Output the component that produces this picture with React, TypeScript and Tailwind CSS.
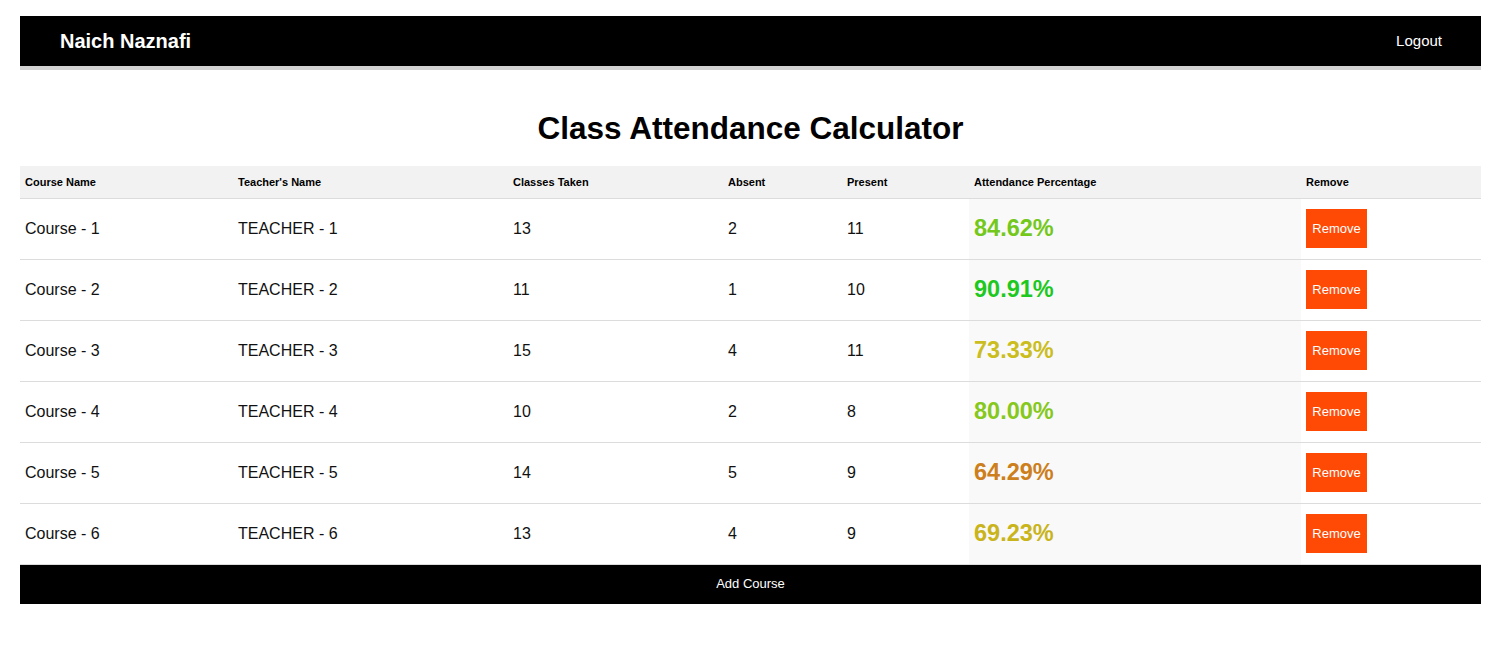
import React from 'react';

interface Course {
  name: string;
  teacher: string;
  taken: number;
  absent: number;
  present: number;
  pct: string;
  color: string;
}

const courses: Course[] = [
  { name: 'Course - 1', teacher: 'TEACHER - 1', taken: 13, absent: 2, present: 11, pct: '84.62%', color: 'text-[#74c81c]' },
  { name: 'Course - 2', teacher: 'TEACHER - 2', taken: 11, absent: 1, present: 10, pct: '90.91%', color: 'text-[#1ec81e]' },
  { name: 'Course - 3', teacher: 'TEACHER - 3', taken: 15, absent: 4, present: 11, pct: '73.33%', color: 'text-[#cbbd1e]' },
  { name: 'Course - 4', teacher: 'TEACHER - 4', taken: 10, absent: 2, present: 8, pct: '80.00%', color: 'text-[#86c81c]' },
  { name: 'Course - 5', teacher: 'TEACHER - 5', taken: 14, absent: 5, present: 9, pct: '64.29%', color: 'text-[#cc7f1c]' },
  { name: 'Course - 6', teacher: 'TEACHER - 6', taken: 13, absent: 4, present: 9, pct: '69.23%', color: 'text-[#c9b41c]' },
];

const cols = ['w-[213px]', 'w-[275px]', 'w-[215px]', 'w-[119px]', 'w-[127px]', 'w-[332px]', 'w-[180px]'];
const heads = ['Course Name', "Teacher's Name", 'Classes Taken', 'Absent', 'Present', 'Attendance Percentage', 'Remove'];

export default function App() {
  return (
    <div className="min-h-screen bg-white pl-[20px] pr-[19px] pt-[16px] font-['Liberation_Sans',Arial,sans-serif] text-[#111]">
      {/* Navbar */}
      <nav className="h-[50px] bg-black flex items-center justify-between pl-[40px] pr-[39px] shadow-[0_4px_0_#d2d2d2]">
        <span className="text-white text-[20px] font-bold">Naich Naznafi</span>
        <span className="text-white text-[15px]">Logout</span>
      </nav>

      <h1 className="mt-[44px] mb-[20px] text-center text-[31.5px] leading-[36px] font-bold text-black">
        Class Attendance Calculator
      </h1>

      <table className="w-full table-fixed border-collapse">
        <thead>
          <tr className="bg-[#f2f2f2] h-[32px] border-b border-[#dcdcdc]">
            {heads.map((h, i) => (
              <th key={i} className={`${cols[i]} px-[5px] text-left text-[11px] font-bold text-black`}>{h}</th>
            ))}
          </tr>
        </thead>
        <tbody>
          {courses.map((c, i) => (
            <tr key={i} className="h-[61px] border-b border-[#dcdcdc] text-[16px]">
              <td className="px-[5px] pt-[1px]">{c.name}</td>
              <td className="px-[5px] pt-[1px]">{c.teacher}</td>
              <td className="px-[5px] pt-[1px]">{c.taken}</td>
              <td className="px-[5px] pt-[1px]">{c.absent}</td>
              <td className="px-[5px] pt-[1px]">{c.present}</td>
              <td className={`px-[5px] pt-[1px] bg-[#f9f9f9] text-[23.5px] font-bold ${c.color}`}>{c.pct}</td>
              <td className="px-[5px]">
                <button className="w-[61px] h-[39px] bg-[#ff4a06] text-white text-[13px]">Remove</button>
              </td>
            </tr>
          ))}
        </tbody>
      </table>

      <button className="w-full h-[39px] bg-black text-white text-[13px]">Add Course</button>
    </div>
  );
}
